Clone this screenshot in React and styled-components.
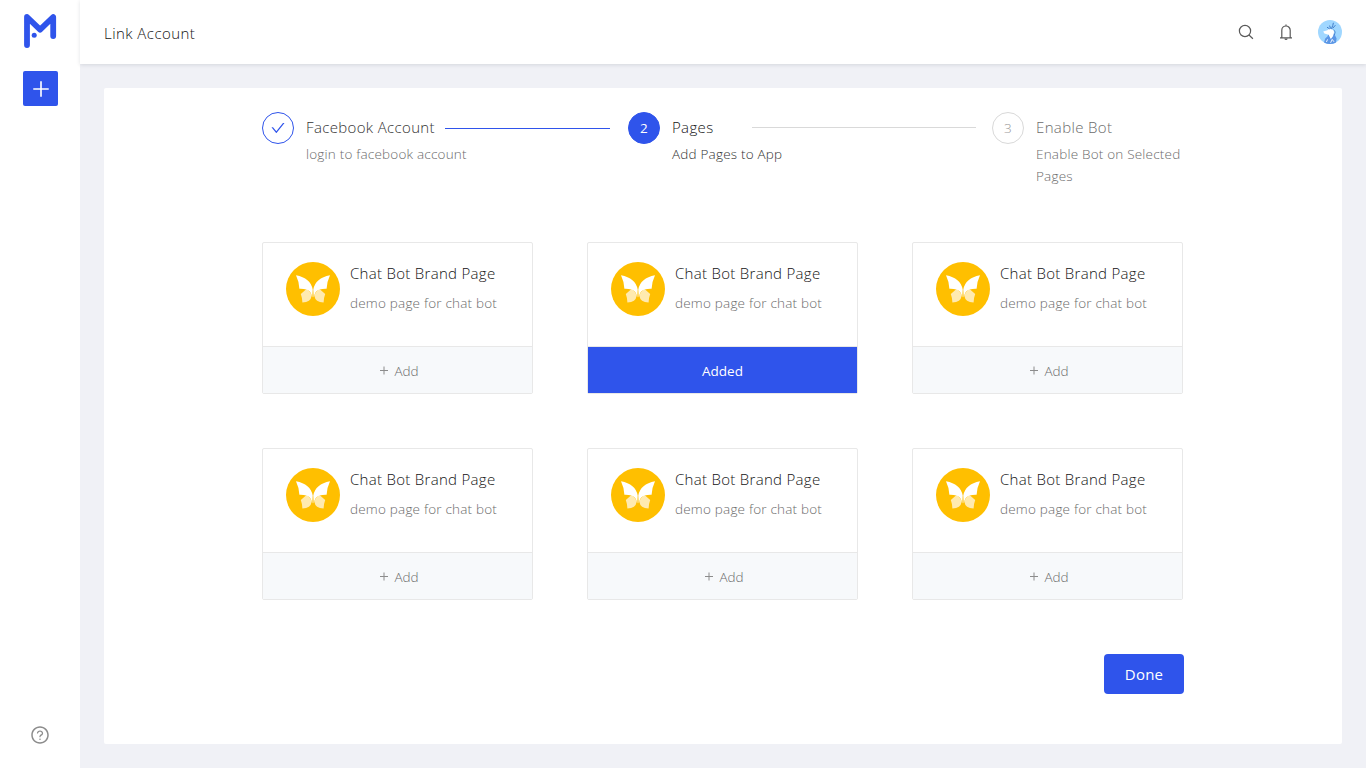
import React from 'react';
import styled, { createGlobalStyle, css } from 'styled-components';
import { AiOutlinePlus, AiOutlineQuestionCircle, AiOutlineCheck } from 'react-icons/ai';

const BLUE = '#2f54eb';

const GlobalStyle = createGlobalStyle`
  *, *::before, *::after { box-sizing: border-box; }
  body {
    margin: 0;
    background: #f0f1f6;
    color: #141414;
    font-family: "Open Sans", "Noto Sans", sans-serif;
    font-size: 13.5px;
    font-weight: 300;
    letter-spacing: 0.2px;
    line-height: 22px;
  }
  svg { display: block; }
`;

const Shell = styled.div`
  display: flex;
  width: 100%;
  height: 100vh;
  overflow: hidden;
`;

const Sidebar = styled.aside`
  display: flex;
  flex-direction: column;
  align-items: center;
  width: 80px;
  flex: none;
  padding: 13px 0 23px;
  background: #fff;
`;

const CreateButton = styled.button`
  display: grid;
  place-items: center;
  width: 35px;
  height: 35px;
  margin: 23px 0 0 1px;
  padding: 0;
  border: 0;
  border-radius: 2px;
  background: ${BLUE};
  color: #fff;
`;

const HelpLink = styled.a`
  margin-top: auto;
  color: #8c8c8c;
`;

const Main = styled.div`
  display: flex;
  flex-direction: column;
  flex: 1;
`;

const Header = styled.header`
  display: flex;
  align-items: center;
  height: 64px;
  flex: none;
  padding: 0 24px;
  background: #fff;
  box-shadow: 0 1px 4px rgba(0, 21, 41, 0.12);
`;

const PageTitle = styled.h1`
  margin: 1px auto 0 0;
  font-size: 15px;
  font-weight: inherit;
  letter-spacing: 0.45px;
`;

const HeaderTools = styled.div`
  display: flex;
  align-items: center;
  gap: 24px;
  color: #595959;
`;

const Panel = styled.main`
  flex: 1;
  margin: 24px;
  padding: 24px 158px;
  border-radius: 2px;
  background: #fff;
`;

const Steps = styled.ol`
  display: flex;
  height: 130px;
  margin: 0;
  padding: 0;
  list-style: none;
`;

const Step = styled.li`
  display: flex;
  width: ${(p) => p.$width}px;
  flex: none;
`;

const badgeStates = {
  finish: css`border-color: ${BLUE}; color: ${BLUE};`,
  process: css`border-color: ${BLUE}; background: ${BLUE}; color: #fff; font-weight: 400;`,
  wait: css`border-color: #d9d9d9; color: #999;`,
};

const StepBadge = styled.span`
  display: grid;
  place-items: center;
  width: 32px;
  height: 32px;
  flex: none;
  margin-right: 12px;
  border: 1px solid;
  border-radius: 50%;
  ${(p) => badgeStates[p.$state]}
`;

const StepBody = styled.div`
  flex: 1;
  min-width: 0;
`;

const StepHead = styled.div`
  display: flex;
  align-items: center;
  height: 30px;
`;

const titleColors = { finish: '#333', process: '#141414', wait: '#6b6b6b' };
const noteColors = { finish: '#6b6b6b', process: '#333', wait: '#6b6b6b' };

const StepTitle = styled.span`
  width: ${(p) => p.$width}px;
  flex: none;
  color: ${(p) => titleColors[p.$state]};
  font-size: 15px;
  letter-spacing: 0.35px;
  white-space: nowrap;
`;

const StepLine = styled.span`
  flex: 1;
  height: 1px;
  margin-right: ${(p) => (p.$done ? 18 : 16)}px;
  margin-top: ${(p) => (p.$done ? 3 : 1)}px;
  background: ${(p) => (p.$done ? BLUE : '#d9d9d9')};
`;

const StepNote = styled.div`
  max-width: 150px;
  margin-top: 1px;
  color: ${(p) => noteColors[p.$state]};
  ${(p) => p.$single && 'white-space: nowrap;'}
`;

const CardGrid = styled.div`
  display: grid;
  grid-template-columns: repeat(3, 271px);
  gap: 54px;
`;

const Card = styled.article`
  display: flex;
  flex-direction: column;
  height: 152px;
  border: 1px solid #e8e8e8;
  border-radius: 2px;
`;

const CardBody = styled.div`
  display: flex;
  gap: 10px;
  flex: 1;
  padding: 19px 0 0 23px;
`;

const CardTitle = styled.h2`
  margin: 0 0 8px;
  font-size: 15px;
  font-weight: inherit;
  letter-spacing: 0.3px;
  white-space: nowrap;
`;

const CardNote = styled.p`
  margin: 0;
  color: #6b6b6b;
  white-space: nowrap;
`;

const CardAction = styled.button`
  display: flex;
  align-items: center;
  justify-content: center;
  gap: 5px;
  height: 47px;
  padding: 2px 0 0 ${(p) => (p.$added ? 0 : 3)}px;
  border: 0;
  border-top: 1px solid #e8e8e8;
  background: ${(p) => (p.$added ? BLUE : '#f7f9fb')};
  color: ${(p) => (p.$added ? '#fff' : '#6b6b6b')};
  font-family: inherit;
  font-size: 13.5px;
  font-weight: ${(p) => (p.$added ? 500 : 300)};
`;

const Footer = styled.div`
  display: flex;
  justify-content: flex-end;
  margin-top: 54px;
`;

const DoneButton = styled.button`
  width: 80px;
  height: 40px;
  padding: 0;
  border: 0;
  border-radius: 4px;
  background: ${BLUE};
  color: #fff;
  font-family: inherit;
  font-size: 15px;
  letter-spacing: 0.2px;
`;

const Logo = () => (
  <svg width="36" height="35" viewBox="-2 0 36 35" fill="none">
    <path d="M3 32V4L16.1 16.6L29.2 4V23" stroke={BLUE} strokeWidth="5.8" strokeLinecap="round" strokeLinejoin="round" />
    <circle cx="10.2" cy="22.3" r="2.5" fill={BLUE} />
  </svg>
);

const SearchIcon = () => (
  <svg width="16" height="16" viewBox="0 0 16 16" fill="none" stroke="currentColor" strokeWidth="1.2">
    <circle cx="7" cy="7" r="5.6" />
    <path d="M11 11L14.9 14.7" />
  </svg>
);

const BellIcon = () => (
  <svg width="16" height="16" viewBox="0 0 16 16" fill="none" stroke="currentColor" strokeWidth="1.2">
    <path d="M8 0.4V2M3.8 13.8V6.2A4.2 4.2 0 0 1 12.2 6.2V13.8M2 13.9H14" />
    <path d="M6.4 14.4A1.6 1.6 0 0 0 9.6 14.4Z" fill="currentColor" stroke="none" />
  </svg>
);

const Avatar = () => (
  <svg width="24" height="24" viewBox="0 0 24 24">
    <circle cx="12" cy="12" r="12" fill="#a0d7ff" />
    <path d="M6 22.4L7.2 18.6L9.4 16.5L10.5 14L15.5 12L18.6 18.5L18 22.4Q12 25.4 6 22.4Z" fill="#5b96e6" />
    <path d="M5.2 11.4L9.4 10.2L11.4 8.8L15.8 10.2L16 13L14.8 16.5L12.8 19L10.6 14.8L6.4 13.6Z" fill="#fff" />
    <path d="M11.8 9L9 7.2M12.6 8.6L11.6 5.6M13.4 8.8L14.8 5.4L15.4 2.8M14.6 8.4L17.4 5.2" stroke="#3f7cc9" strokeWidth="1" fill="none" />
    <path d="M15.6 9.6L17.2 12L16.4 15" stroke="#3f7cc9" strokeWidth="0.8" fill="none" />
    <path d="M8.4 22L9.6 19.4M12.6 22.8L14.2 19.4L16 21.8" stroke="#fff" strokeWidth="0.9" fill="none" />
  </svg>
);

const Butterfly = () => (
  <svg width="54" height="54" viewBox="0 0 54 54">
    <circle cx="27" cy="27" r="27" fill="#ffbf00" />
    <path d="M20.5 27L14.8 32Q16.2 35.5 16.4 40.6Q24.8 40 25.6 34Q25 30 20.5 27Z" fill="#ffeab0" />
    <path d="M33.5 27L39.2 32Q37.8 35.5 37.6 40.6Q29.2 40 28.4 34Q29 30 33.5 27Z" fill="#ffeab0" />
    <path d="M10 13.3Q24.5 16 26.7 27.5L26.3 35.5Q25 28.8 20.5 27.6Q17 26.6 13.4 26.8Q13 19.5 10 13.3Z" fill="#fff" />
    <path d="M44 13.3Q29.5 16 27.3 27.5L27.7 35.5Q29 28.8 33.5 27.6Q37 26.6 40.6 26.8Q41 19.5 44 13.3Z" fill="#fff" />
  </svg>
);

const SmallPlus = () => (
  <svg width="10" height="10" viewBox="0 0 10 10" fill="none" stroke="#8c8c8c">
    <path d="M5 0.5V8.5M1 4.5H9" />
  </svg>
);

const steps = [
  { state: 'finish', title: 'Facebook Account', note: 'login to facebook account', width: 366, titleWidth: 139 },
  { state: 'process', title: 'Pages', note: 'Add Pages to App', width: 364, titleWidth: 80 },
  { state: 'wait', title: 'Enable Bot', note: 'Enable Bot on Selected Pages', width: 192, titleWidth: 80 },
];

const pages = [false, true, false, false, false, false].map((added, id) => ({
  id,
  added,
  title: 'Chat Bot Brand Page',
  note: 'demo page for chat bot',
}));

export default function App() {
  return (
    <>
      <GlobalStyle />
      <Shell>
        <Sidebar>
          <Logo />
          <CreateButton aria-label="Create"><AiOutlinePlus size={22} /></CreateButton>
          <HelpLink><AiOutlineQuestionCircle size={20} /></HelpLink>
        </Sidebar>
        <Main>
          <Header>
            <PageTitle>Link Account</PageTitle>
            <HeaderTools>
              <SearchIcon />
              <BellIcon />
              <Avatar />
            </HeaderTools>
          </Header>
          <Panel>
            <Steps>
              {steps.map((s, i) => (
                <Step key={s.title} $width={s.width}>
                  <StepBadge $state={s.state}>
                    {s.state === 'finish' ? <AiOutlineCheck size={16} /> : i + 1}
                  </StepBadge>
                  <StepBody>
                    <StepHead>
                      <StepTitle $state={s.state} $width={s.titleWidth}>{s.title}</StepTitle>
                      {s.state !== 'wait' && <StepLine $done={s.state === 'finish'} />}
                    </StepHead>
                    <StepNote $state={s.state} $single={s.state !== 'wait'}>{s.note}</StepNote>
                  </StepBody>
                </Step>
              ))}
            </Steps>
            <CardGrid>
              {pages.map((p) => (
                <Card key={p.id}>
                  <CardBody>
                    <Butterfly />
                    <div>
                      <CardTitle>{p.title}</CardTitle>
                      <CardNote>{p.note}</CardNote>
                    </div>
                  </CardBody>
                  <CardAction $added={p.added}>
                    {p.added ? 'Added' : <><SmallPlus />Add</>}
                  </CardAction>
                </Card>
              ))}
            </CardGrid>
            <Footer><DoneButton>Done</DoneButton></Footer>
          </Panel>
        </Main>
      </Shell>
    </>
  );
}
